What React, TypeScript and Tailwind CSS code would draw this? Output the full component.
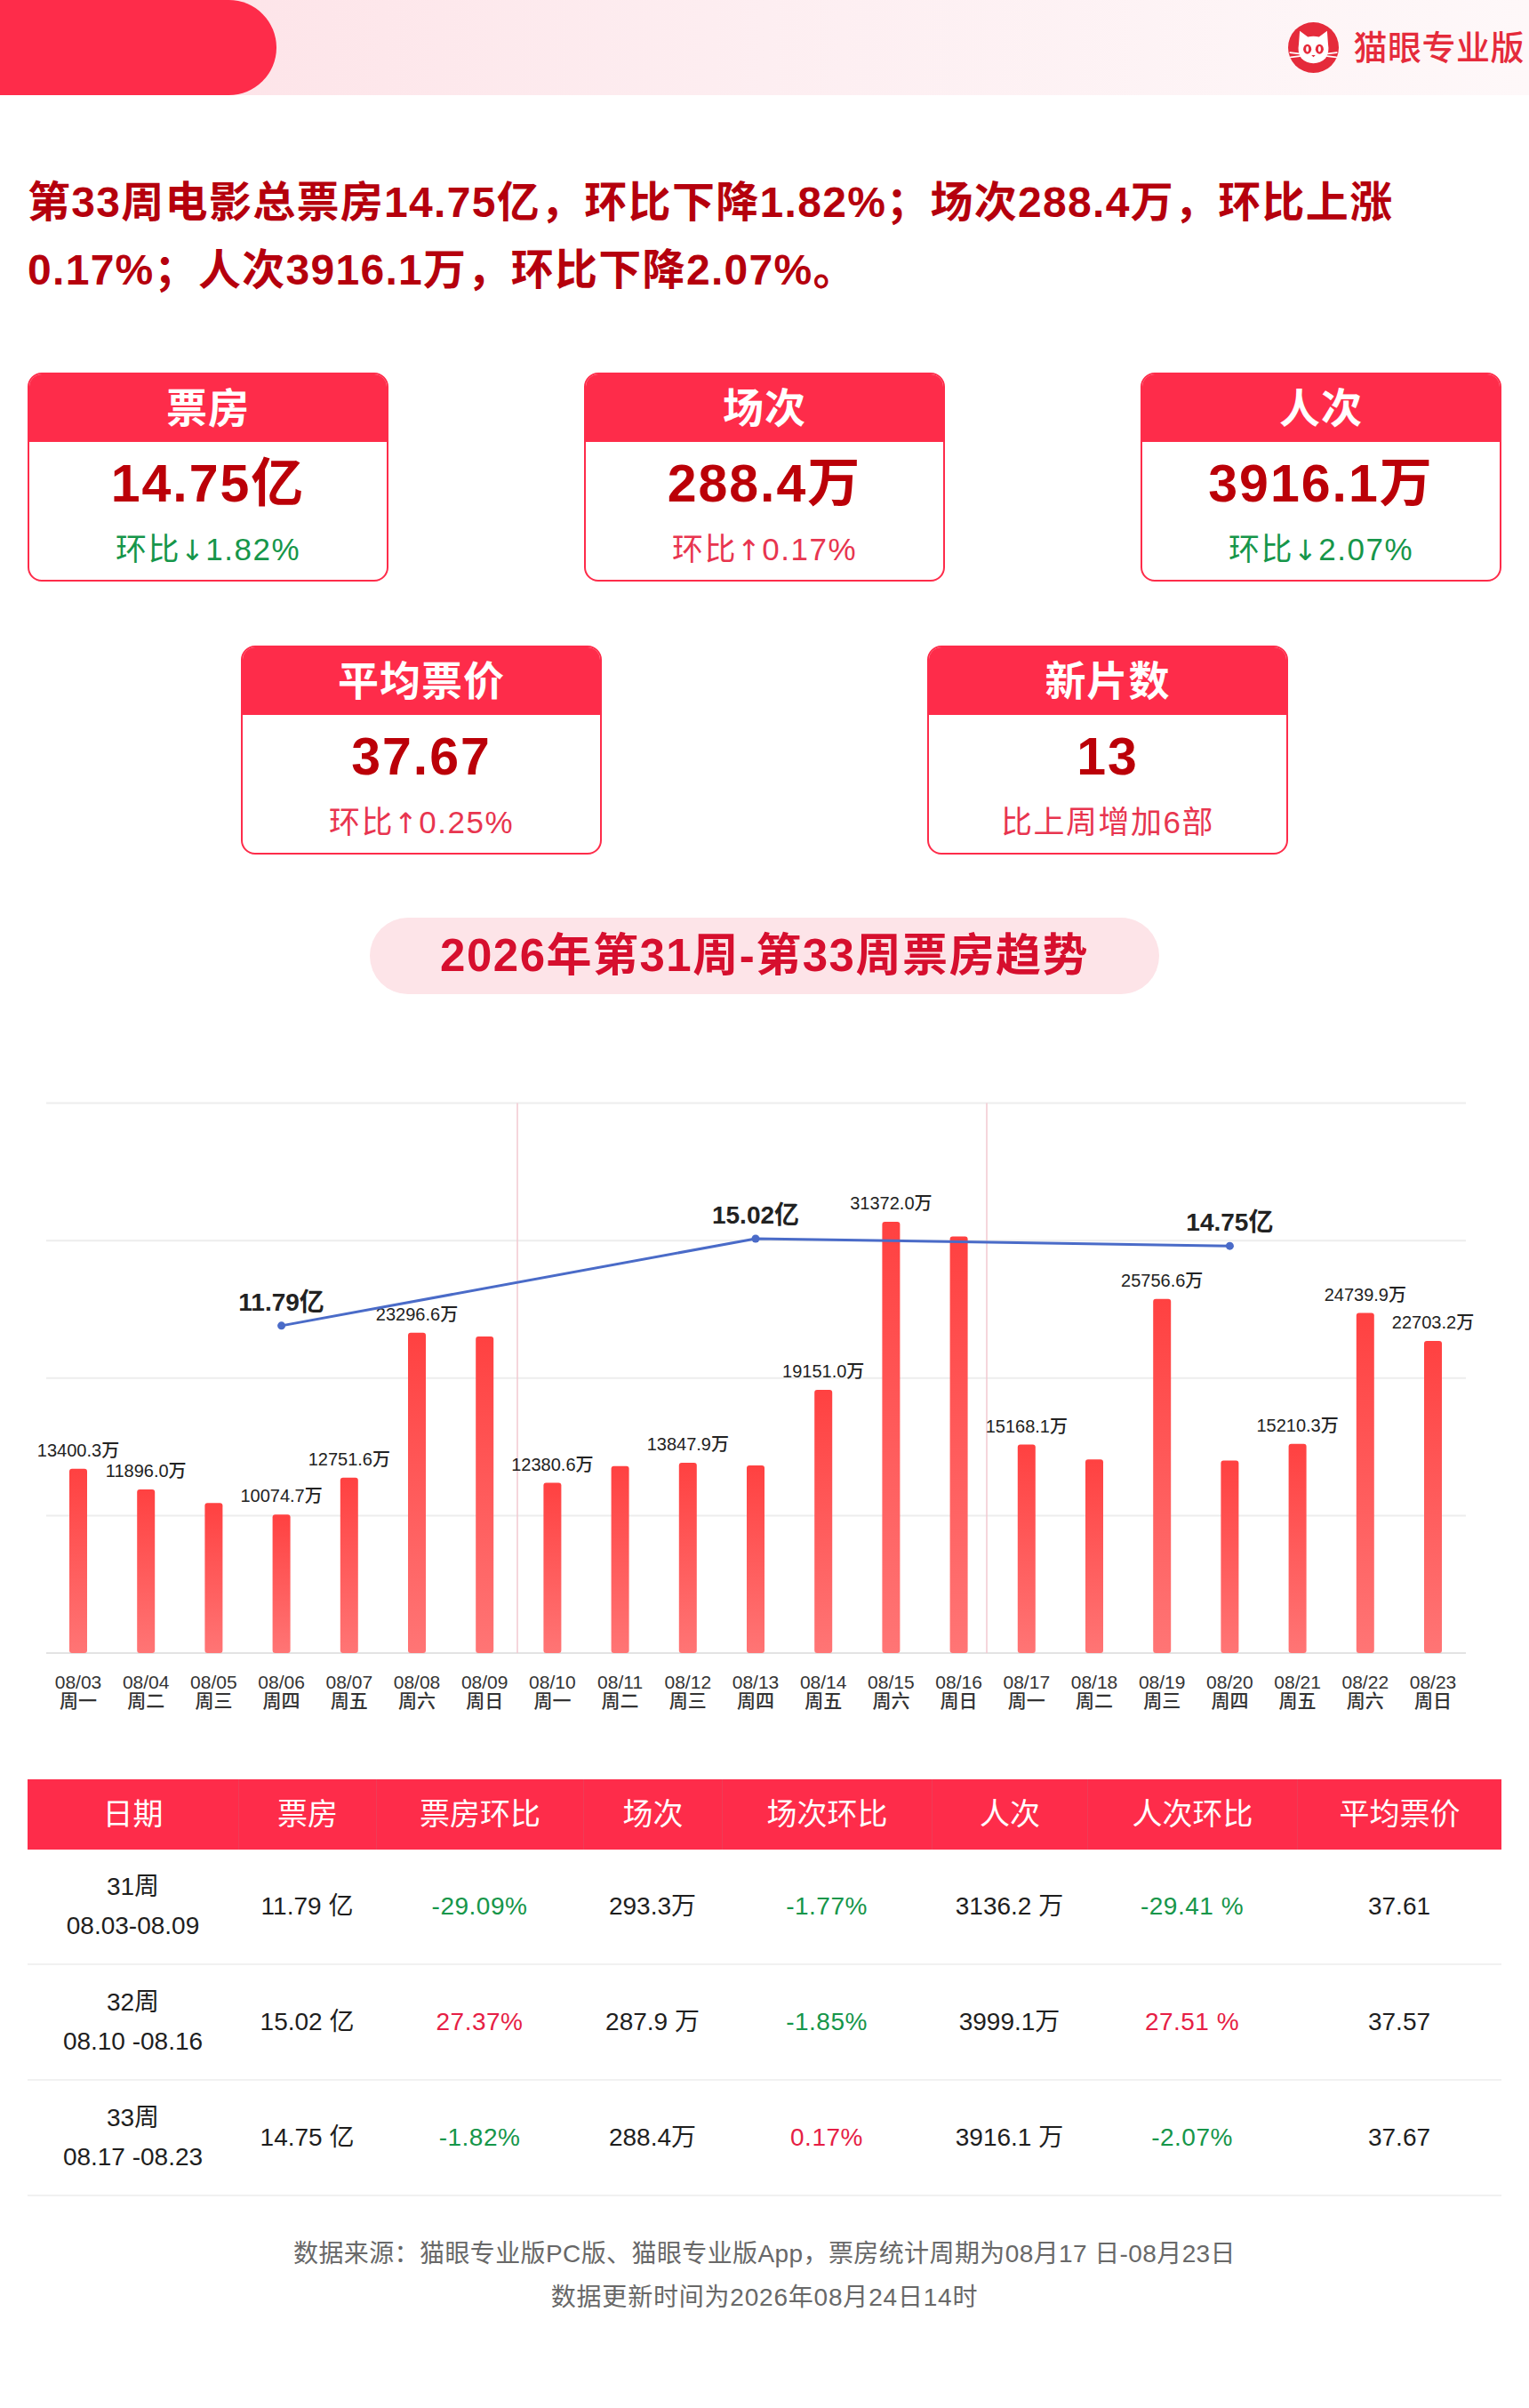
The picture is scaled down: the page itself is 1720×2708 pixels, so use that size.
import React from 'react';

type Bar = { v: number; label: boolean };

const values: Bar[] = [
  { v: 13400.3, label: true },
  { v: 11896.0, label: true },
  { v: 10919, label: false },
  { v: 10074.7, label: true },
  { v: 12751.6, label: true },
  { v: 23296.6, label: true },
  { v: 23020, label: false },
  { v: 12380.6, label: true },
  { v: 13598, label: false },
  { v: 13847.9, label: true },
  { v: 13656, label: false },
  { v: 19151.0, label: true },
  { v: 31372.0, label: true },
  { v: 30308, label: false },
  { v: 15168.1, label: true },
  { v: 14088, label: false },
  { v: 25756.6, label: true },
  { v: 14002, label: false },
  { v: 15210.3, label: true },
  { v: 24739.9, label: true },
  { v: 22703.2, label: true },
];

const weekdays = ['周一', '周二', '周三', '周四', '周五', '周六', '周日'];

const AXIS = 708;
const UNIT = 0.01546;
const bx = (i: number) => 88 + i * 76.2;
const ly = (v: number) => 242 + (15.02 - v) * 30.3;

function Logo() {
  return (
    <svg width="57" height="57" viewBox="0 0 100 100">
      <circle cx="50" cy="50" r="50" fill="#e52b3b" />
      <path
        d="M21 44 L23 17 L39 29 Q50 26 61 29 L77 17 L79 44 Q82 60 74 71 Q64 81 50 81 Q36 81 26 71 Q18 60 21 44 Z"
        fill="#ffffff"
      />
      <ellipse cx="38" cy="53" rx="8" ry="9.5" fill="#e52b3b" />
      <ellipse cx="62" cy="53" rx="8" ry="9.5" fill="#e52b3b" />
      <ellipse cx="38" cy="53" rx="2.6" ry="5.5" fill="#ffffff" />
      <ellipse cx="62" cy="53" rx="2.6" ry="5.5" fill="#ffffff" />
      <path d="M46 65 L54 65 L50 69 Z" fill="#e52b3b" />
      <path d="M4 60 L22 62 M5 69 L23 67 M96 60 L78 62 M95 69 L77 67" stroke="#ffffff" strokeWidth="3.2" strokeLinecap="round" />
    </svg>
  );
}

function StatCard({
  title,
  value,
  pre,
  arrow,
  post,
  subColor,
}: {
  title: string;
  value: string;
  pre: string;
  arrow?: string;
  post?: string;
  subColor: string;
}) {
  return (
    <div className="w-[406px] h-[235px] border-2 border-[#fe2c4a] rounded-[16px] overflow-hidden flex flex-col bg-white">
      <div className="h-[76px] bg-[#fe2c4a] flex items-center justify-center text-white text-[46px] font-bold leading-none tracking-[1px]">
        {title}
      </div>
      <div className="flex flex-col items-center pt-[14px]">
        <div className="text-[59px] leading-[66px] font-bold text-[#bb0008] tracking-[2px]">{value}</div>
        <div className={`mt-[20px] text-[35px] leading-[42px] tracking-[1.5px] ${subColor}`}>
          {pre}
          {arrow && <span className="[font-family:'DejaVu_Sans',sans-serif] text-[32px]">{arrow}</span>}
          {post}
        </div>
      </div>
    </div>
  );
}

function Chart() {
  const grid = [0, 1, 2, 3].map((k) => AXIS - (k + 1) * 154.6);
  const pts = [
    { x: bx(3), v: 11.79, t: '11.79亿' },
    { x: bx(10), v: 15.02, t: '15.02亿' },
    { x: bx(17), v: 14.75, t: '14.75亿' },
  ];
  return (
    <svg width="1720" height="790" className="block">
      <defs>
        <linearGradient id="barGrad" x1="0" y1="0" x2="0" y2="1">
          <stop offset="0" stopColor="#ff4141" />
          <stop offset="1" stopColor="#ff7575" />
        </linearGradient>
      </defs>
      {grid.map((y, i) => (
        <line key={i} x1="52" x2="1649" y1={y} y2={y} stroke="#ededed" strokeWidth="2" />
      ))}
      <line x1="52" x2="1649" y1={AXIS} y2={AXIS} stroke="#e3e3e3" strokeWidth="2" />
      <line x1="582" x2="582" y1={grid[3]} y2={AXIS} stroke="#f2c8d0" strokeWidth="1.5" />
      <line x1="1110" x2="1110" y1={grid[3]} y2={AXIS} stroke="#f2c8d0" strokeWidth="1.5" />
      {values.map((b, i) => {
        const h = b.v * UNIT;
        const top = AXIS - h;
        return (
          <g key={i}>
            <rect x={bx(i) - 10} y={top} width="20" height={h} rx="3" fill="url(#barGrad)" />
            {b.label && (
              <text x={bx(i)} y={top - 14} textAnchor="middle" fontSize="20" fontWeight="500" fill="#222222">
                {b.v.toFixed(1)}万
              </text>
            )}
            <text x={bx(i)} y={748} textAnchor="middle" fontSize="21" fontWeight="500" fill="#333333">
              08/{String(3 + i).padStart(2, '0')}
            </text>
            <text x={bx(i)} y={769} textAnchor="middle" fontSize="21" fontWeight="500" fill="#333333">
              {weekdays[i % 7]}
            </text>
          </g>
        );
      })}
      <polyline
        points={pts.map((p) => `${p.x},${ly(p.v)}`).join(' ')}
        fill="none"
        stroke="#4a6bc8"
        strokeWidth="3"
      />
      {pts.map((p, i) => (
        <g key={i}>
          <circle cx={p.x} cy={ly(p.v)} r="4.5" fill="#4a6bc8" />
          <text x={p.x} y={ly(p.v) - 17} textAnchor="middle" fontSize="28" fontWeight="600" fill="#222222">
            {p.t}
          </text>
        </g>
      ))}
    </svg>
  );
}

const G = 'text-[#16964a]';
const R = 'text-[#e61e45]';

const rows = [
  { w: '31周', d: '08.03-08.09', bo: '11.79 亿', boc: '-29.09%', bocC: G, s: '293.3万', sc: '-1.77%', scC: G, p: '3136.2 万', pc: '-29.41 %', pcC: G, avg: '37.61' },
  { w: '32周', d: '08.10 -08.16', bo: '15.02 亿', boc: '27.37%', bocC: R, s: '287.9 万', sc: '-1.85%', scC: G, p: '3999.1万', pc: '27.51 %', pcC: R, avg: '37.57' },
  { w: '33周', d: '08.17 -08.23', bo: '14.75 亿', boc: '-1.82%', bocC: G, s: '288.4万', sc: '0.17%', scC: R, p: '3916.1 万', pc: '-2.07%', pcC: G, avg: '37.67' },
];

const headers = ['日期', '票房', '票房环比', '场次', '场次环比', '人次', '人次环比', '平均票价'];
const COLS = 'grid grid-cols-[237px_155px_233px_156px_236px_175px_236px_230px]';

function Table() {
  return (
    <div className="mx-[31px] mt-[60px]">
      <div className={`${COLS} h-[79px] bg-[#fe2c4a] text-white text-[34px]`}>
        {headers.map((h, i) => (
          <div key={h} className={`flex items-center justify-center ${i > 0 ? 'border-l border-[#ef3c57]' : ''}`}>
            {h}
          </div>
        ))}
      </div>
      {rows.map((r) => (
        <div key={r.w} className={`${COLS} h-[130px] border-b-2 border-[#f1f1f1] text-[28px] text-[#1e1e1e]`}>
          <div className="flex flex-col items-center justify-center leading-[44px]">
            <span>{r.w}</span>
            <span className="whitespace-pre">{r.d}</span>
          </div>
          <div className="flex items-center justify-center whitespace-pre">{r.bo}</div>
          <div className={`flex items-center justify-center tracking-[0.5px] ${r.bocC}`}>{r.boc}</div>
          <div className="flex items-center justify-center whitespace-pre">{r.s}</div>
          <div className={`flex items-center justify-center tracking-[0.5px] ${r.scC}`}>{r.sc}</div>
          <div className="flex items-center justify-center whitespace-pre">{r.p}</div>
          <div className={`flex items-center justify-center whitespace-pre tracking-[0.5px] ${r.pcC}`}>{r.pc}</div>
          <div className="flex items-center justify-center">{r.avg}</div>
        </div>
      ))}
    </div>
  );
}

export default function App() {
  return (
    <div className="w-[1720px] h-[2708px] bg-white overflow-hidden [font-family:'Liberation_Sans','Noto_Sans_CJK_SC',sans-serif]">
      <header className="h-[107px] flex items-stretch bg-linear-to-r from-[#fde0e5] via-[#fdeef1] to-[#fef8f9]">
        <div className="w-[311px] bg-[#fe2c4a] rounded-r-[54px]" />
        <div className="flex-1" />
        <div className="flex items-center gap-[16px] pr-[5px]">
          <Logo />
          <span className="text-[38px] leading-none text-[#e52b3b] font-medium tracking-[0.5px]">猫眼专业版</span>
        </div>
      </header>

      <p className="mt-[83px] px-[31px] text-[48px] leading-[76px] font-bold text-[#b5000d] tracking-[1.3px]">
        第33周电影总票房14.75亿，环比下降1.82%；场次288.4万，环比上涨
        <br />
        0.17%；人次3916.1万，环比下降2.07%。
      </p>

      <div className="mt-[77px] px-[31px] flex justify-between">
        <StatCard title="票房" value="14.75亿" pre="环比" arrow="↓" post="1.82%" subColor="text-[#16964a]" />
        <StatCard title="场次" value="288.4万" pre="环比" arrow="↑" post="0.17%" subColor="text-[#e8354f]" />
        <StatCard title="人次" value="3916.1万" pre="环比" arrow="↓" post="2.07%" subColor="text-[#16964a]" />
      </div>

      <div className="mt-[72px] flex justify-center gap-[366px]">
        <StatCard title="平均票价" value="37.67" pre="环比" arrow="↑" post="0.25%" subColor="text-[#e8354f]" />
        <StatCard title="新片数" value="13" pre="比上周增加6部" subColor="text-[#e8354f]" />
      </div>

      <div className="mt-[71px] mx-auto w-[888px] h-[86px] rounded-full bg-[#fde4e8] flex items-center justify-center text-[51px] font-bold text-[#d60f2e] tracking-[1.5px]">
        2026年第31周-第33周票房趋势
      </div>

      <div className="mt-[33px]">
        <Chart />
      </div>

      <Table />

      <div className="mt-[40px] text-center text-[28px] leading-[49px] text-[#686868]">
        <div className="tracking-[0.4px]">数据来源：猫眼专业版PC版、猫眼专业版App，票房统计周期为08月17 日-08月23日</div>
        <div className="tracking-[0.8px]">数据更新时间为2026年08月24日14时</div>
      </div>
    </div>
  );
}
